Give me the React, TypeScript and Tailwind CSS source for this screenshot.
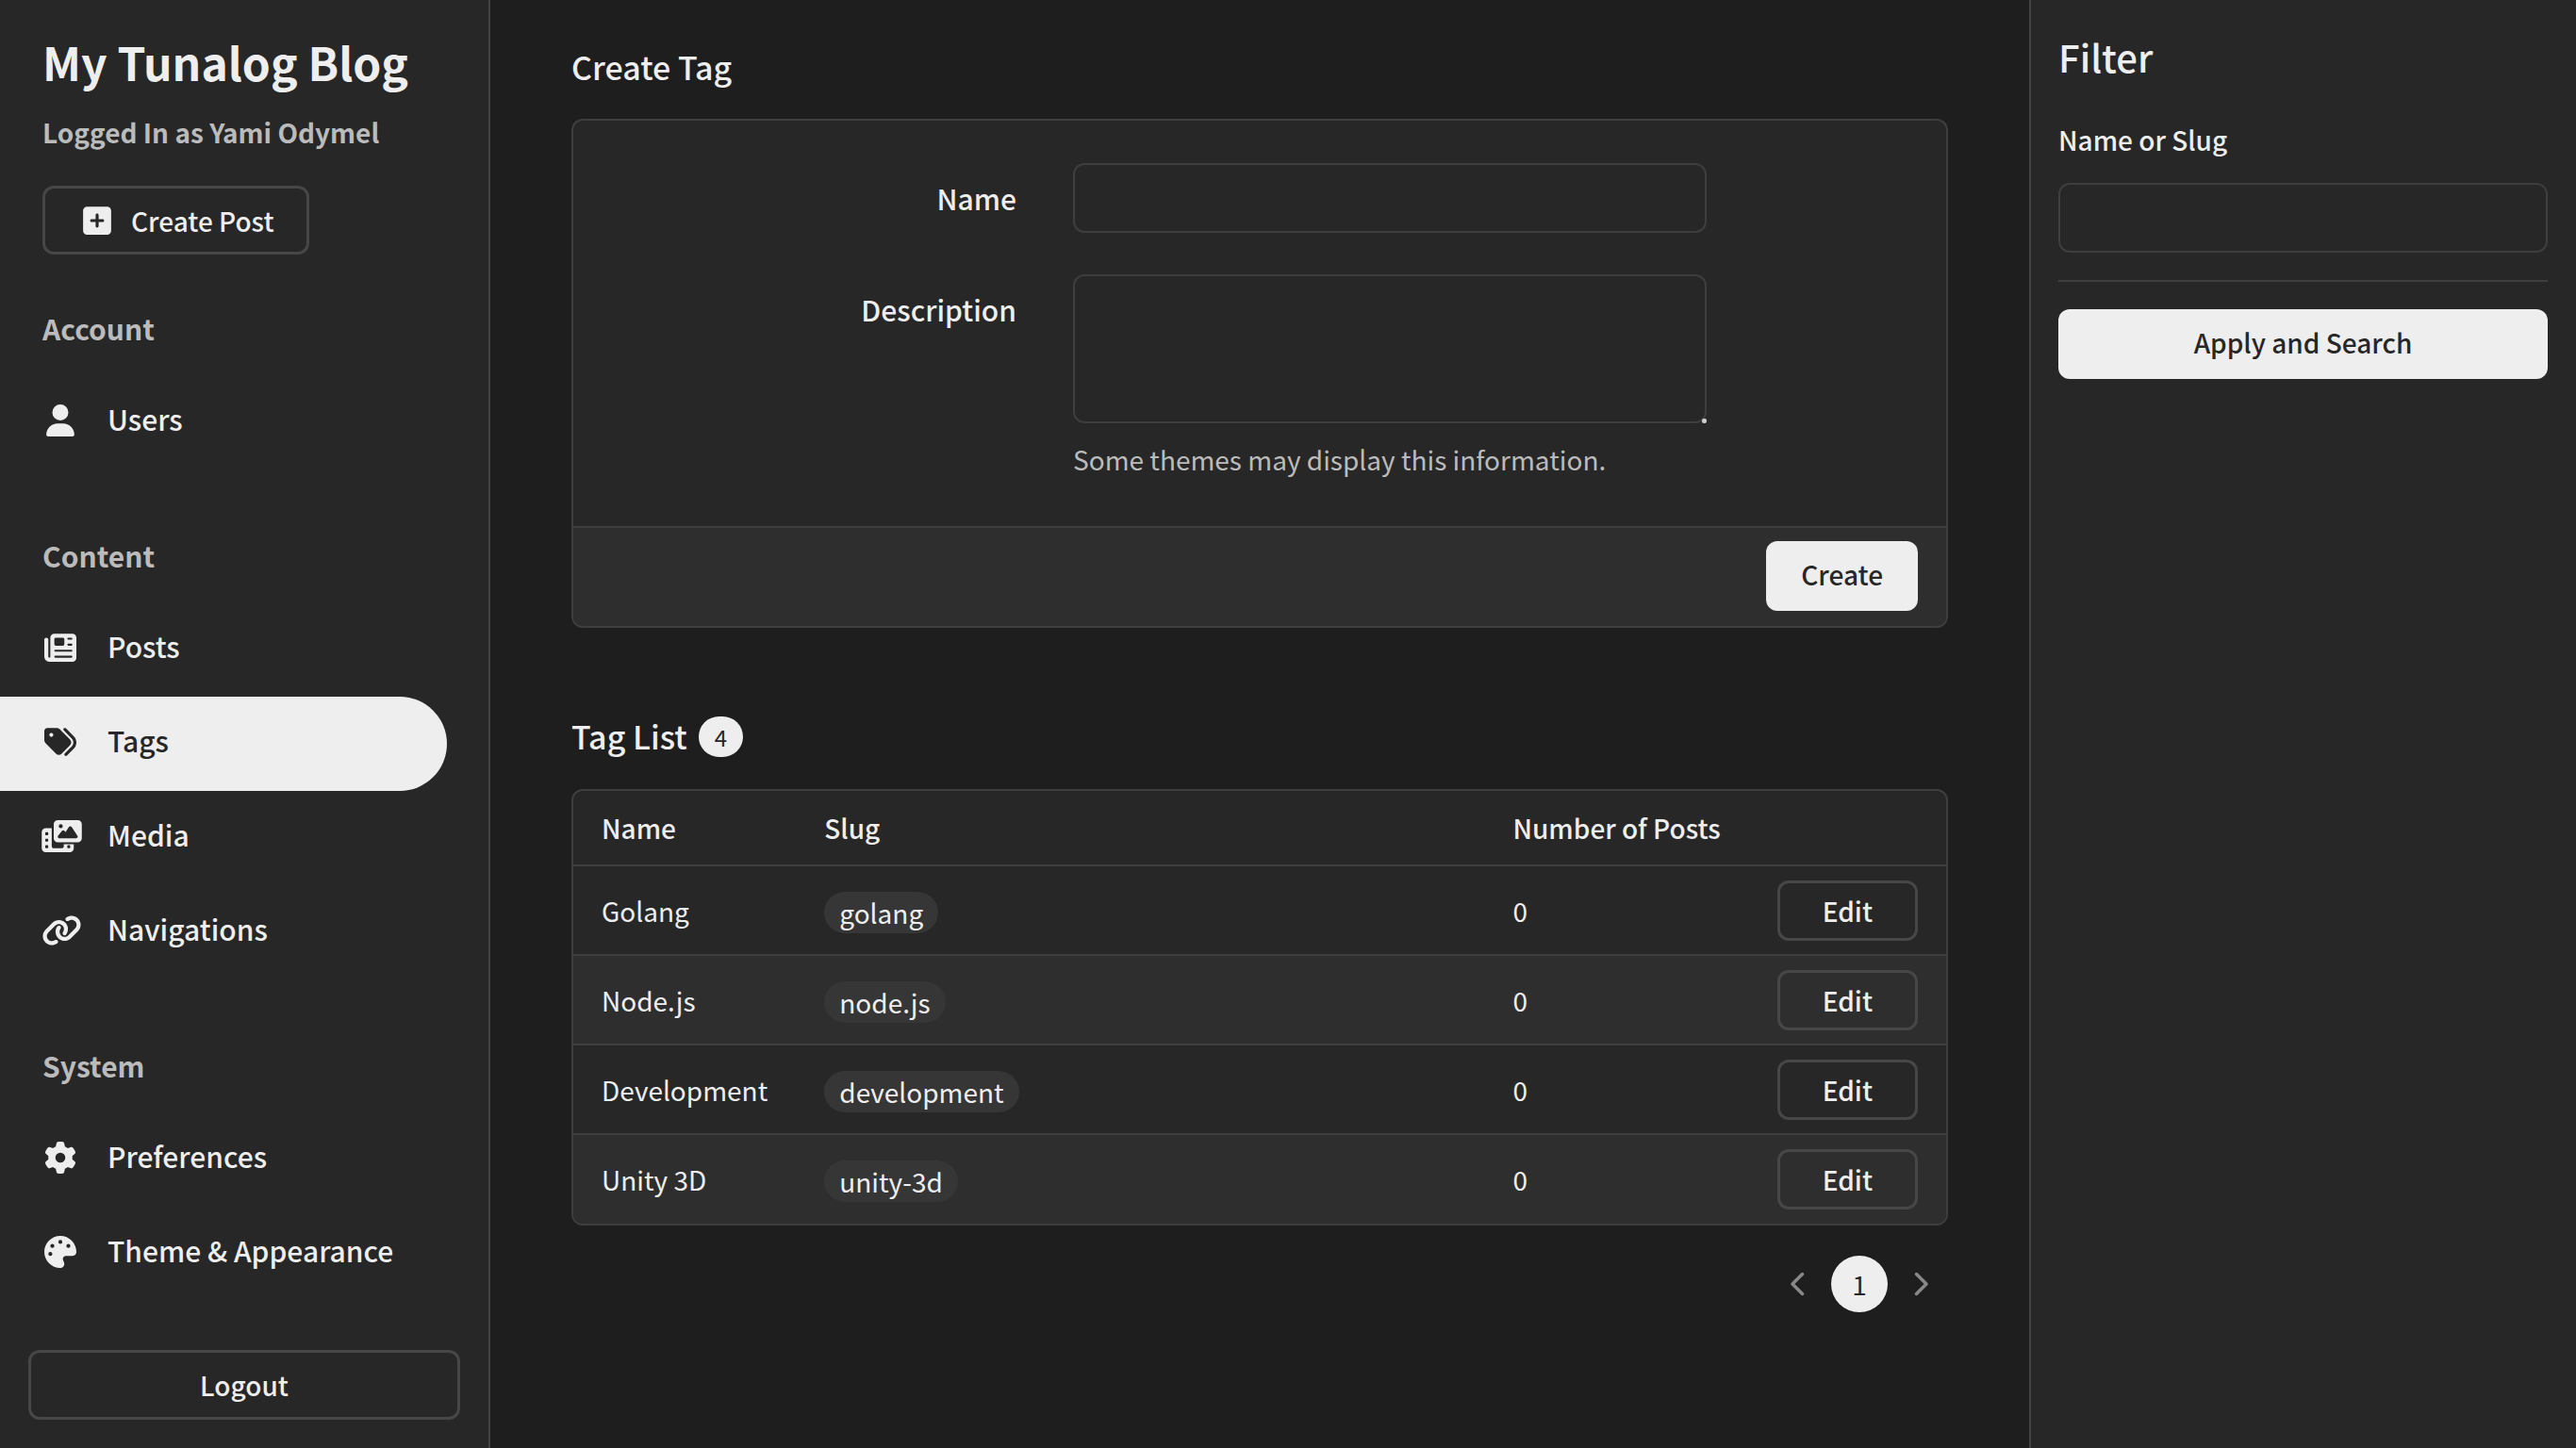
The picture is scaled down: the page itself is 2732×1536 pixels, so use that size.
import type { ComponentType, ReactNode } from "react";
import {
  FaChevronLeft,
  FaChevronRight,
  FaGear,
  FaLink,
  FaNewspaper,
  FaPalette,
  FaPhotoFilm,
  FaSquarePlus,
  FaTags,
  FaUser,
} from "react-icons/fa6";

type NavEntry = {
  label: string;
  icon: ComponentType<{ className?: string }>;
  wide?: boolean;
  active?: boolean;
};

const sections: { title: string; items: NavEntry[] }[] = [
  { title: "Account", items: [{ label: "Users", icon: FaUser }] },
  {
    title: "Content",
    items: [
      { label: "Posts", icon: FaNewspaper },
      { label: "Tags", icon: FaTags, active: true },
      { label: "Media", icon: FaPhotoFilm, wide: true },
      { label: "Navigations", icon: FaLink, wide: true },
    ],
  },
  {
    title: "System",
    items: [
      { label: "Preferences", icon: FaGear },
      { label: "Theme & Appearance", icon: FaPalette },
    ],
  },
];

const tags = [
  { name: "Golang", slug: "golang", posts: 0 },
  { name: "Node.js", slug: "node.js", posts: 0 },
  { name: "Development", slug: "development", posts: 0 },
  { name: "Unity 3D", slug: "unity-3d", posts: 0 },
];

const outlineButton = "rounded-xl border-3 border-[#474747] font-medium";
const primaryButton = "h-[74px] rounded-xl bg-[#eee] pb-1 font-medium text-[#272727]";
const field =
  "block w-full rounded-xl border-2 border-[#3e3e3e] bg-[#272727] px-5 text-[#eee] outline-none focus:border-[#888]";

function NavItem({ label, icon: Icon, wide, active }: NavEntry) {
  return (
    <a
      href="#"
      aria-current={active ? "page" : undefined}
      className={
        "mr-11 flex items-center gap-[31px] pt-6 pb-8 pl-11 font-medium " +
        (active ? "rounded-r-full bg-[#eee] text-[#272727]" : "")
      }
    >
      <span className="mt-1 flex w-[39px] shrink-0 [justify-content:safe_center]">
        <Icon className={wide ? "h-[34px] w-[43px] shrink-0" : "size-[34px] shrink-0"} />
      </span>
      {label}
    </a>
  );
}

function Sidebar() {
  return (
    <aside className="flex w-[520px] shrink-0 flex-col border-r-2 border-[#434343] bg-[#272727] pt-[33px] pb-[30px] text-[30px] leading-[44px]">
      <header className="mb-14 px-[45px]">
        <h1 className="text-[48px] leading-[64px] font-bold">My Tunalog Blog</h1>
        <p className="mt-[21px] text-[28px] font-bold text-[#bbb]">Logged In as Yami Odymel</p>
        <button
          type="button"
          className={outlineButton + " mt-[35px] flex h-[73px] items-center gap-[21px] pr-[34px] pl-10 text-[28px]"}
        >
          <FaSquarePlus className="h-[34px] w-[30px]" />
          Create Post
        </button>
      </header>
      <nav className="flex flex-col gap-[69px]">
        {sections.map((section) => (
          <section key={section.title}>
            <h2 className="mb-7 px-[45px] font-bold text-[#bbb]">{section.title}</h2>
            {section.items.map((item) => (
              <NavItem key={item.label} {...item} />
            ))}
          </section>
        ))}
      </nav>
      <button type="button" className={outlineButton + " mx-[30px] mt-auto h-[74px] text-[28px]"}>
        Logout
      </button>
    </aside>
  );
}

function FormRow({ id, label, children }: { id: string; label: string; children: ReactNode }) {
  return (
    <div className="grid grid-cols-[425fr_672fr_149fr] gap-x-[60px]">
      <label htmlFor={id} className="pt-[15px] text-right text-[30px] font-medium">
        {label}
      </label>
      <div>{children}</div>
    </div>
  );
}

function CreateTag() {
  return (
    <section>
      <h2 className="text-[34px] leading-[48px] font-medium">Create Tag</h2>
      <form className="mt-[31px] overflow-hidden rounded-xl border-2 border-[#3e3e3e] bg-[#272727]">
        <div className="flex flex-col gap-11 px-[45px] pt-[45px] pb-[49px]">
          <FormRow id="tag-name" label="Name">
            <input id="tag-name" type="text" className={field + " h-[74px]"} />
          </FormRow>
          <FormRow id="tag-description" label="Description">
            <div className="relative">
              <textarea
                id="tag-description"
                className={field + " h-[158px] resize-y py-3 [&::-webkit-resizer]:hidden"}
              />
              <span className="pointer-events-none absolute right-0 bottom-0 size-[5px] rounded-xs bg-[#ccc]" />
            </div>
            <p className="mt-4 text-[#bbb]">Some themes may display this information.</p>
          </FormRow>
        </div>
        <div className="flex justify-end border-t-2 border-[#3e3e3e] bg-[#2e2e2e] px-[30px] pt-[14px] pb-4">
          <button type="button" className={primaryButton + " px-[37px]"}>
            Create
          </button>
        </div>
      </form>
    </section>
  );
}

function TagList() {
  return (
    <section className="mt-[91px]">
      <div className="flex items-center gap-3">
        <h2 className="text-[34px] leading-[48px] font-medium">Tag List</h2>
        <span className="rounded-full bg-[#eee] px-[17px] text-[24px] leading-[43px] text-[#272727]">
          {tags.length}
        </span>
      </div>
      <div className="mt-8 overflow-hidden rounded-xl border-2 border-[#3e3e3e] bg-[#272727]">
        <table className="w-full text-left whitespace-nowrap">
          <thead>
            <tr className="h-[79px]">
              <th className="px-[30px] font-medium">Name</th>
              <th className="w-full px-[30px] font-medium">Slug</th>
              <th className="px-[30px] font-medium">Number of Posts</th>
              <th aria-label="Actions" />
            </tr>
          </thead>
          <tbody>
            {tags.map((tag) => (
              <tr key={tag.slug} className="h-[95px] border-t-2 border-[#3e3e3e] even:bg-[#2e2e2e]">
                <td className="px-[30px]">{tag.name}</td>
                <td className="px-[30px]">
                  <span className="mt-1 inline-block rounded-full bg-[#363636] px-4">{tag.slug}</span>
                </td>
                <td className="px-[30px]">{tag.posts}</td>
                <td className="px-[30px]">
                  <button type="button" className={outlineButton + " block h-[64px] px-[45px]"}>
                    Edit
                  </button>
                </td>
              </tr>
            ))}
          </tbody>
        </table>
      </div>
      <nav aria-label="Pagination" className="mt-8 flex items-center justify-end gap-1">
        <button type="button" aria-label="Previous page" className="flex size-[60px] items-center justify-center text-[#888]">
          <FaChevronLeft className="size-[28px]" />
        </button>
        <button type="button" aria-current="page" className="size-[60px] rounded-full bg-[#eee] text-[#272727]">
          1
        </button>
        <button type="button" aria-label="Next page" className="flex size-[60px] items-center justify-center text-[#888]">
          <FaChevronRight className="size-[28px]" />
        </button>
      </nav>
    </section>
  );
}

function FilterPanel() {
  return (
    <aside className="w-[580px] shrink-0 border-l-2 border-[#434343] bg-[#272727] pt-8 pr-[30px] pl-[29px]">
      <h2 className="text-[40px] leading-[56px] font-medium">Filter</h2>
      <form>
        <label htmlFor="filter-term" className="mt-[38px] mb-6 block font-medium">
          Name or Slug
        </label>
        <input id="filter-term" type="text" className={field + " h-[74px]"} />
        <hr className="my-[29px] border-t-2 border-[#3e3e3e]" />
        <button type="button" className={primaryButton + " w-full"}>
          Apply and Search
        </button>
      </form>
    </aside>
  );
}

export default function App() {
  return (
    <div className="flex min-h-screen bg-[#1e1e1e] font-['Noto_Sans_CJK_TC',sans-serif] text-[28px] leading-[44px] text-[#eee]">
      <Sidebar />
      <main className="min-w-0 flex-1 px-[86px] pt-[47px]">
        <CreateTag />
        <TagList />
      </main>
      <FilterPanel />
    </div>
  );
}
